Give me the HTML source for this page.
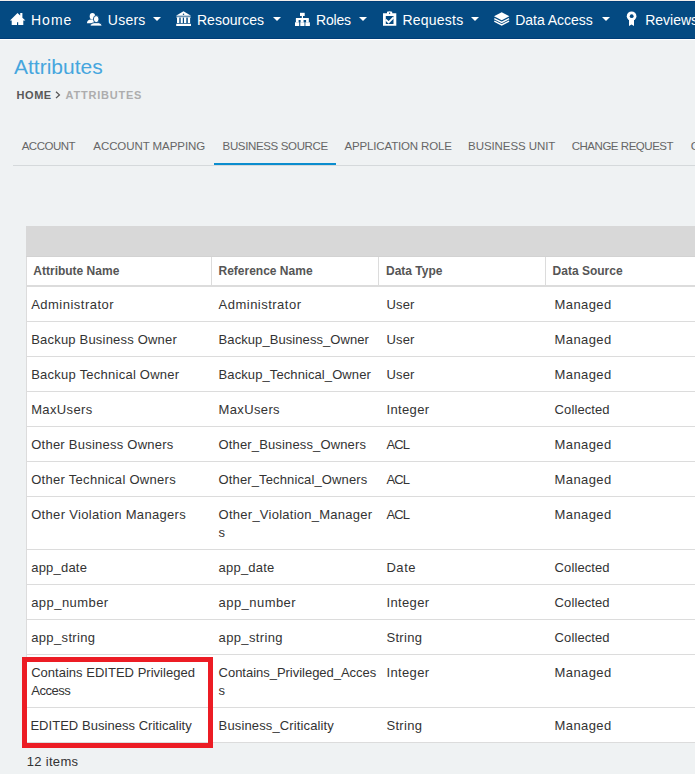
<!DOCTYPE html>
<html><head><meta charset="utf-8">
<style>
*{box-sizing:border-box;margin:0;padding:0}
html,body{width:695px;height:774px;overflow:hidden;background:#eff2f3;font-family:"Liberation Sans",sans-serif;color:#333;position:relative}
div{position:absolute;white-space:nowrap}
.nav{left:0;top:0;width:695px;height:40px;background:#044a82;border-top:1px solid #f2eeec;border-bottom:1px solid #fff;box-shadow:inset 0 1px 0 #003d78,inset 0 -1px 0 #003d78}
.nt{color:#fff;font-size:14px;line-height:30px}
.car{top:17px;width:0;height:0;border-left:4px solid transparent;border-right:4px solid transparent;border-top:4.5px solid #fff}
.title{font-size:21px;line-height:30px;color:#45a6de}
.bc{font-size:11px;font-weight:bold;line-height:30px}
.tab{font-size:11.5px;line-height:30px;color:#666}
.tabline{left:13px;top:165px;width:682px;height:1px;background:#d5d9db}
.uline{left:214px;top:163px;width:122px;height:2px;background:#0b8dce}
.gh{left:26px;top:226px;width:669px;height:31px;background:#d8d8d8;border-bottom:1px solid #d2d2d2}
.hdr{left:26px;top:257px;width:669px;height:30px;background:#fff;border-left:1px solid #dcdcdc;border-bottom:2px solid #dcdcdc}
.vl{top:257px;width:1px;height:28px;background:#dcdcdc}
.hc{font-size:12px;font-weight:bold;color:#555;line-height:30px}
.row{left:26px;width:669px;background:#fff;border-left:1px solid #dcdcdc;border-bottom:1px solid #dcdcdc}
.cell{font-size:13px;color:#333;line-height:30px}
.red{left:22px;top:657px;width:191px;height:91px;border:5px solid #ec1c24}

</style></head><body>
<div class="nav"></div>
<div class="nt" style="left:31px;top:5px;letter-spacing:1.0px;">Home</div>
<div class="nt" style="left:107.8px;top:5px;letter-spacing:0.25px;">Users</div>
<div class="car" style="left:153.2px"></div>
<div class="nt" style="left:197px;top:5px;letter-spacing:0.0px;">Resources</div>
<div class="car" style="left:272.8px"></div>
<div class="nt" style="left:316px;top:5px;letter-spacing:-0.2px;">Roles</div>
<div class="car" style="left:359px"></div>
<div class="nt" style="left:402.5px;top:5px;letter-spacing:0.214px;">Requests</div>
<div class="car" style="left:470.9px"></div>
<div class="nt" style="left:515.2px;top:5px;letter-spacing:-0.03px;">Data Access</div>
<div class="car" style="left:601.5px"></div>
<div class="nt" style="left:645.2px;top:5px;letter-spacing:0px;">Reviews</div>
<div class="tabline"></div><div class="uline"></div>
<svg width="695" height="40" viewBox="0 0 695 40" style="position:absolute;left:0;top:0">
<g fill="#fff">
<path d="M10 20.6 L17.5 13 L20.2 15.6 V13 H22.4 V17.7 L25.4 20.6 H23.3 V25 H18.2 V22.3 H17 V25 H11.7 V20.6 Z"/>
<ellipse cx="92.4" cy="16.3" rx="2.7" ry="3.2"/>
<path d="M86.9 23.3 Q87.3 19.6 90.8 19.6 H94 V23.3 Z"/>
<g stroke="#044a82" stroke-width="0.9"><ellipse cx="96.2" cy="19.1" rx="2.8" ry="3.5"/><path d="M89.9 26.1 Q90.6 22.7 94 22.7 H98.6 Q101.6 22.7 102.2 26.1 Z"/></g>
<path d="M183.5 11.3 L191 15.7 H176 Z"/>
<circle cx="183.5" cy="14.3" r="0.75" fill="#044a82"/><rect x="176.3" y="16.6" width="14.5" height="0.9"/>
<rect x="177" y="17.3" width="2.3" height="5.8"/><rect x="180.7" y="17.3" width="2.1" height="5.8"/><rect x="184" y="17.3" width="2.3" height="5.8"/><rect x="187.8" y="17.3" width="2.3" height="5.8"/>
<rect x="176.2" y="23.8" width="14.8" height="2.2"/>
<rect x="300" y="12.8" width="4.7" height="3.2"/><rect x="301.8" y="15.8" width="1.2" height="2.4"/>
<rect x="295.9" y="18" width="12.9" height="2"/>
<rect x="295.9" y="19.5" width="2.7" height="3"/><rect x="300.6" y="19.5" width="3" height="3"/><rect x="306.1" y="19.5" width="2.7" height="3"/>
<rect x="295" y="22.3" width="4.2" height="3.7"/><rect x="300.3" y="22.3" width="4.2" height="3.7"/><rect x="305.4" y="22.3" width="4.5" height="3.7"/>
<path fill-rule="evenodd" d="M383 13.3 H387 V11.8 Q389.6 10.8 392.2 11.8 V13.3 H396.3 V25.8 H383 Z M385.8 15.9 V24 H393.5 V15.9 Z"/>
<circle cx="389.6" cy="13.3" r="0.7" fill="#044a82"/>
<rect x="385.8" y="15" width="7.7" height="1"/>
<path d="M385.8 19.6 L388.6 22.5 L393.6 17.4" stroke="#fff" stroke-width="1.9" fill="none"/>
<path d="M501.7 12.2 L509.4 16.3 L501.7 20.3 L494 16.3 Z"/>
<path d="M494.3 18.6 L501.7 22.4 L509.1 18.6 M494.3 21.1 L501.7 24.9 L509.1 21.1" stroke="#fff" stroke-width="1.3" fill="none"/>
<circle cx="631.6" cy="16.2" r="4.8"/>
<circle cx="631.7" cy="16.2" r="1.9" fill="#044a82"/>
<path d="M629 20 V26 L631.5 24.6 L634 26 V20 Z"/>
</g>
</svg>

<div class="title" style="left:14px;top:51.7px;letter-spacing:0.0px;">Attributes</div>
<div class="bc" style="left:16.6px;top:80px;letter-spacing:0.533px;color:#585858">HOME</div>
<svg class="chev" width="6" height="8" viewBox="0 0 6 8" style="position:absolute;left:55.3px;top:90.5px"><path d="M1 0.7 L4.4 3.9 L1 7.1" stroke="#555" stroke-width="1.3" fill="none"/></svg>
<div class="bc" style="left:65.6px;top:80px;letter-spacing:0.778px;color:#adadad">ATTRIBUTES</div>
<div class="tab" style="left:21.7px;top:131px;letter-spacing:-0.483px;">ACCOUNT</div>
<div class="tab" style="left:93.3px;top:131px;letter-spacing:-0.071px;">ACCOUNT MAPPING</div>
<div class="tab" style="left:222.6px;top:131px;letter-spacing:-0.357px;">BUSINESS SOURCE</div>
<div class="tab" style="left:344.5px;top:131px;letter-spacing:-0.153px;">APPLICATION ROLE</div>
<div class="tab" style="left:468.1px;top:131px;letter-spacing:-0.083px;">BUSINESS UNIT</div>
<div class="tab" style="left:571.7px;top:131px;letter-spacing:-0.469px;">CHANGE REQUEST</div>
<div class="tab" style="left:690.8px;top:131px;letter-spacing:0px;">C</div>
<div class="gh"></div><div class="hdr"></div>
<div class="vl" style="left:211px"></div>
<div class="vl" style="left:378px"></div>
<div class="vl" style="left:545px"></div>
<div class="hc" style="left:33.3px;top:256px;letter-spacing:0px;">Attribute Name</div>
<div class="hc" style="left:218.5px;top:256px;letter-spacing:0px;">Reference Name</div>
<div class="hc" style="left:386px;top:256px;letter-spacing:0px;">Data Type</div>
<div class="hc" style="left:552.6px;top:256px;letter-spacing:0px;">Data Source</div>
<div class="row" style="top:287px;height:35px"></div>
<div class="cell" style="left:31.2px;top:290px;letter-spacing:0.483px;">Administrator</div>
<div class="cell" style="left:218.6px;top:290px;letter-spacing:0.483px;">Administrator</div>
<div class="cell" style="left:386.4px;top:290px;letter-spacing:0.2px;">User</div>
<div class="cell" style="left:554.6px;top:290px;letter-spacing:0.4px;">Managed</div>
<div class="row" style="top:322px;height:35px"></div>
<div class="cell" style="left:31.2px;top:325px;letter-spacing:0.2px;">Backup Business Owner</div>
<div class="cell" style="left:218.6px;top:325px;letter-spacing:0.075px;">Backup_Business_Owner</div>
<div class="cell" style="left:386.4px;top:325px;letter-spacing:0.2px;">User</div>
<div class="cell" style="left:554.6px;top:325px;letter-spacing:0.4px;">Managed</div>
<div class="row" style="top:357px;height:35px"></div>
<div class="cell" style="left:31.2px;top:360px;letter-spacing:0.243px;">Backup Technical Owner</div>
<div class="cell" style="left:218.6px;top:360px;letter-spacing:0.09px;">Backup_Technical_Owner</div>
<div class="cell" style="left:386.4px;top:360px;letter-spacing:0.2px;">User</div>
<div class="cell" style="left:554.6px;top:360px;letter-spacing:0.4px;">Managed</div>
<div class="row" style="top:392px;height:35px"></div>
<div class="cell" style="left:31.2px;top:395px;letter-spacing:0.357px;">MaxUsers</div>
<div class="cell" style="left:218.6px;top:395px;letter-spacing:0.357px;">MaxUsers</div>
<div class="cell" style="left:386.4px;top:395px;letter-spacing:0.383px;">Integer</div>
<div class="cell" style="left:554.6px;top:395px;letter-spacing:0.1px;">Collected</div>
<div class="row" style="top:427px;height:35px"></div>
<div class="cell" style="left:31.2px;top:430px;letter-spacing:0.245px;">Other Business Owners</div>
<div class="cell" style="left:218.6px;top:430px;letter-spacing:0.14px;">Other_Business_Owners</div>
<div class="cell" style="left:386.4px;top:430px;letter-spacing:-0.9px;">ACL</div>
<div class="cell" style="left:554.6px;top:430px;letter-spacing:0.4px;">Managed</div>
<div class="row" style="top:462px;height:35px"></div>
<div class="cell" style="left:31.2px;top:465px;letter-spacing:0.286px;">Other Technical Owners</div>
<div class="cell" style="left:218.6px;top:465px;letter-spacing:0.129px;">Other_Technical_Owners</div>
<div class="cell" style="left:386.4px;top:465px;letter-spacing:-0.9px;">ACL</div>
<div class="cell" style="left:554.6px;top:465px;letter-spacing:0.4px;">Managed</div>
<div class="row" style="top:497px;height:53px"></div>
<div class="cell" style="left:31.2px;top:500px;letter-spacing:0.322px;">Other Violation Managers</div>
<div class="cell" style="left:218.6px;top:500px;letter-spacing:0.255px;">Other_Violation_Manager</div>
<div class="cell" style="left:218.6px;top:518px;letter-spacing:0px;">s</div>
<div class="cell" style="left:386.4px;top:500px;letter-spacing:-0.9px;">ACL</div>
<div class="cell" style="left:554.6px;top:500px;letter-spacing:0.4px;">Managed</div>
<div class="row" style="top:550px;height:35px"></div>
<div class="cell" style="left:31.2px;top:553px;letter-spacing:0.214px;">app_date</div>
<div class="cell" style="left:218.6px;top:553px;letter-spacing:0.214px;">app_date</div>
<div class="cell" style="left:386.4px;top:553px;letter-spacing:0.567px;">Date</div>
<div class="cell" style="left:554.6px;top:553px;letter-spacing:0.1px;">Collected</div>
<div class="row" style="top:585px;height:35px"></div>
<div class="cell" style="left:31.2px;top:588px;letter-spacing:0.444px;">app_number</div>
<div class="cell" style="left:218.6px;top:588px;letter-spacing:0.444px;">app_number</div>
<div class="cell" style="left:386.4px;top:588px;letter-spacing:0.383px;">Integer</div>
<div class="cell" style="left:554.6px;top:588px;letter-spacing:0.1px;">Collected</div>
<div class="row" style="top:620px;height:35px"></div>
<div class="cell" style="left:31.2px;top:623px;letter-spacing:0.356px;">app_string</div>
<div class="cell" style="left:218.6px;top:623px;letter-spacing:0.356px;">app_string</div>
<div class="cell" style="left:386.4px;top:623px;letter-spacing:0.32px;">String</div>
<div class="cell" style="left:554.6px;top:623px;letter-spacing:0.1px;">Collected</div>
<div class="row" style="top:655px;height:53px"></div>
<div class="cell" style="left:31.2px;top:658px;letter-spacing:0.016px;">Contains EDITED Privileged</div>
<div class="cell" style="left:31.2px;top:676px;letter-spacing:-0.46px;">Access</div>
<div class="cell" style="left:218.6px;top:658px;letter-spacing:-0.025px;">Contains_Privileged_Acces</div>
<div class="cell" style="left:218.6px;top:676px;letter-spacing:0px;">s</div>
<div class="cell" style="left:386.4px;top:658px;letter-spacing:0.383px;">Integer</div>
<div class="cell" style="left:554.6px;top:658px;letter-spacing:0.4px;">Managed</div>
<div class="row" style="top:708px;height:35px"></div>
<div class="cell" style="left:30.4px;top:711px;letter-spacing:0.038px;">EDITED Business Criticality</div>
<div class="cell" style="left:218.6px;top:711px;letter-spacing:0.132px;">Business_Criticality</div>
<div class="cell" style="left:386.4px;top:711px;letter-spacing:0.32px;">String</div>
<div class="cell" style="left:554.6px;top:711px;letter-spacing:0.4px;">Managed</div>
<div class="cell" style="left:26.8px;top:747px;letter-spacing:0.3px;">12 items</div>
<div class="red"></div>
</body></html>
